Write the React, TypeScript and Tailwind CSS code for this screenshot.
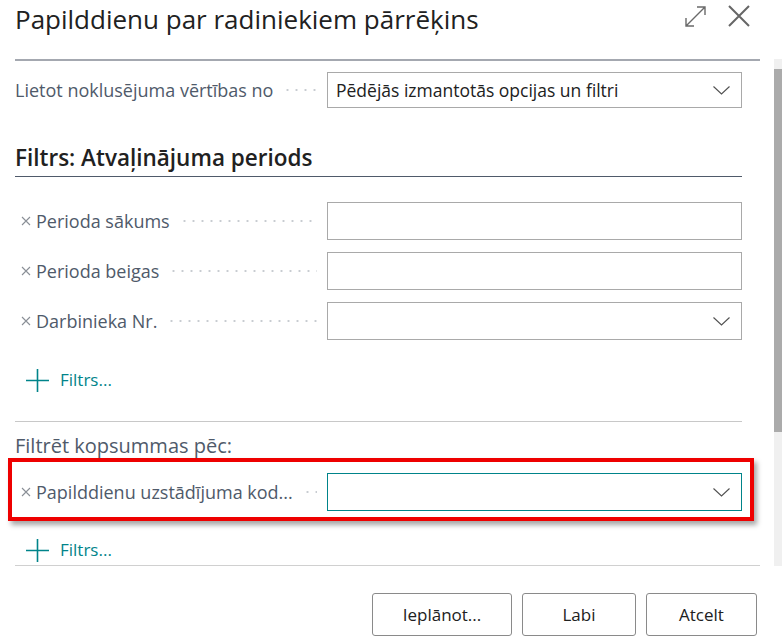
import React from "react";

const FONT = { fontFamily: '"Open Sans", "Noto Sans", "Liberation Sans", sans-serif' };

function XMark() {
  return (
    <svg width="10" height="10" viewBox="0 0 10 10" className="shrink-0">
      <path d="M1 1 L9 9 M9 1 L1 9" stroke="#8a8f96" strokeWidth="1.1" fill="none" />
    </svg>
  );
}

function Chevron() {
  return (
    <svg width="17" height="9" viewBox="0 0 17 9" className="shrink-0">
      <path d="M0.5 0.5 L8.5 8 L16.5 0.5" stroke="#505050" strokeWidth="1.1" fill="none" />
    </svg>
  );
}

function Plus() {
  return (
    <svg width="23" height="23" viewBox="0 0 23 23" className="shrink-0">
      <path d="M11.5 0 V23 M0 11.5 H23" stroke="#00848a" strokeWidth="1.6" fill="none" />
    </svg>
  );
}

function Dots() {
  return (
    <div className="flex-1 h-[4px] mx-[10px] bg-[radial-gradient(circle,_#c8ccd1_0.9px,_transparent_1.3px)] bg-[length:9px_4px] bg-repeat-x" />
  );
}

function FilterRow({ label, dropdown, focused }: { label: string; dropdown?: boolean; focused?: boolean }) {
  return (
    <div className="flex items-center h-[38px]">
      <div className="w-[312px] flex items-center pl-[6px]">
        <XMark />
        <span className="ml-[5px] text-[18px] text-[#4f5a6a] whitespace-nowrap">{label}</span>
        <Dots />
      </div>
      <div
        className={
          "flex-1 h-[38px] flex items-center justify-end pr-[11px] bg-white border " +
          (focused ? "border-[#00848a]" : "border-[#a9a9a9]")
        }
      >
        {dropdown ? <Chevron /> : null}
      </div>
    </div>
  );
}

function AddFilter() {
  return (
    <div className="flex items-center h-[24px] pl-[11px]">
      <Plus />
      <span className="ml-[11px] text-[17px] text-[#00848a]">Filtrs...</span>
    </div>
  );
}

export default function App() {
  return (
    <div className="w-[782px] h-[643px] bg-white overflow-hidden flex flex-col" style={FONT}>
      {/* Header */}
      <div className="h-[59px] flex items-start justify-between pl-[15px] pr-[32px] shrink-0">
        <h1 className="text-[26px] leading-[36px] mt-[1px] text-[#212121] font-normal">
          Papilddienu par radiniekiem pārrēķins
        </h1>
        <div className="flex items-center gap-[22px] mt-[5px]">
          <svg width="22" height="22" viewBox="0 0 22 22">
            <path
              d="M2 21 L21 2 M13 2 H21 V10 M2 13 V21 H10"
              stroke="#6a6a6a"
              strokeWidth="1.4"
              fill="none"
            />
          </svg>
          <svg width="22" height="22" viewBox="0 0 22 22">
            <path d="M1 1 L21 21 M21 1 L1 21" stroke="#666666" strokeWidth="2" fill="none" />
          </svg>
        </div>
      </div>

      {/* Body */}
      <div className="flex h-[507px] shrink-0">
        <div className="w-[774px] pl-[15px] pr-[14px]">
          <div className="h-[507px] border-t-2 border-b border-t-[#a4a8b0] border-b-[#d0d0d0]">
            <div className="w-[727px] flex flex-col">
              {/* Default values row */}
              <div className="flex items-center h-[36px] mt-[11px]">
                <div className="w-[312px] flex items-center">
                  <span className="text-[18px] text-[#4f5a6a] whitespace-nowrap">Lietot noklusējuma vērtības no</span>
                  <Dots />
                </div>
                <div className="flex-1 h-[36px] flex items-center justify-between pl-[8px] pr-[11px] border border-[#a9a9a9]">
                  <span className="text-[17.5px] text-[#212121] whitespace-nowrap">
                    Pēdējās izmantotās opcijas un filtri
                  </span>
                  <Chevron />
                </div>
              </div>

              {/* Section header */}
              <div className="mt-[36px] pb-[4px] border-b border-[#4f5a6a]">
                <div className="text-[22.5px] leading-[28px] font-semibold text-[#212121]">
                  Filtrs: Atvaļinājuma periods
                </div>
              </div>

              <div className="mt-[25px] flex flex-col gap-[12px]">
                <FilterRow label="Perioda sākums" />
                <FilterRow label="Perioda beigas" />
                <FilterRow label="Darbinieka Nr." dropdown />
              </div>

              <div className="mt-[28px]">
                <AddFilter />
              </div>

              <div className="mt-[29px] border-t border-[#c8c8c8]" />

              <div className="mt-[12px] text-[20px] leading-[24px] text-[#4f5a6a]">Filtrēt kopsummas pēc:</div>

              {/* Highlighted row */}
              <div className="-ml-[7px] mr-[-12px] border-4 border-[#ee0000] pt-[11px] pb-[6px] pl-[3px] pr-[8px] shadow-[3px_4px_5px_rgba(0,0,0,0.35)]">
                <FilterRow label="Papilddienu uzstādījuma kod..." dropdown focused />
              </div>

              <div className="mt-[17px]">
                <AddFilter />
              </div>
            </div>
          </div>
        </div>
        {/* Scrollbar */}
        <div className="w-[8px] h-[507px] bg-[#f0f0f0] flex flex-col">
          <div className="mt-[10px] h-[363px] bg-[#ababab]" />
        </div>
      </div>

      {/* Footer */}
      <div className="flex justify-end gap-[10px] pr-[25px] pt-[27px]">
        <button className="w-[140px] h-[43px] border border-[#8a8a8a] rounded-[3px] text-[17px] text-[#212121] bg-white">
          Ieplānot...
        </button>
        <button className="w-[114px] h-[43px] border border-[#8a8a8a] rounded-[3px] text-[17px] text-[#212121] bg-white">
          Labi
        </button>
        <button className="w-[111px] h-[43px] border border-[#8a8a8a] rounded-[3px] text-[17px] text-[#212121] bg-white">
          Atcelt
        </button>
      </div>
    </div>
  );
}
